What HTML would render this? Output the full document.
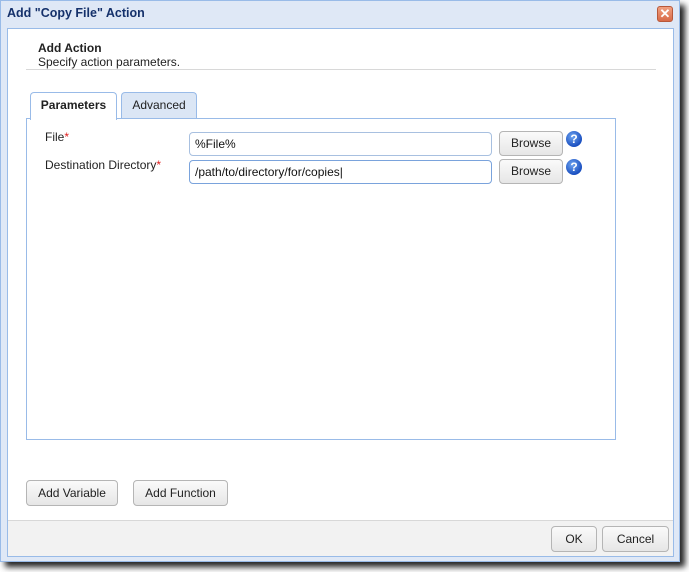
<!DOCTYPE html>
<html><head><style>
*{box-sizing:border-box;margin:0;padding:0}
body{width:689px;height:572px;background:#fff;position:relative;overflow:hidden;font-family:"Liberation Sans",Arial,sans-serif;font-size:12px;color:#222}
.abs{position:absolute}
.frame{left:0;top:0;width:680px;height:562px;background:#dfe8f6;border:1px solid #99bbe8;box-shadow:5px 5px 6px #222}
.title{left:7px;top:6px;font-weight:bold;font-size:12.5px;color:#15316b}
.inner{left:7px;top:28px;width:667px;height:529px;background:#fff;border:1px solid #99bbe8}
.btn{position:absolute;background:linear-gradient(#fafafa,#e6e6e6);border:1px solid #b5b5b5;border-radius:4px;text-align:center;font-size:12px;color:#222}
.inp{position:absolute;background:#fff;border:1px solid #a8c0e0;border-radius:4px;padding-left:5px;font-size:12px;line-height:22px;color:#111}
.help{position:absolute;width:16px;height:16px;border-radius:50%;background:radial-gradient(circle at 40% 35%,#6fa5f0,#1a4fc0 70%);color:#fff;font-weight:bold;font-size:12px;text-align:center;line-height:16px}
.req{color:#e02020}
</style></head><body>
<div class="abs frame"></div>
<div class="abs title">Add "Copy File" Action</div>
<div class="abs" style="left:657px;top:6px;width:16px;height:16px;border-radius:3px;background:linear-gradient(#f0a080,#d86a48);border:1px solid #b8583a;color:#fff;font-weight:bold;font-size:13px;text-align:center;line-height:14px">✕</div>
<div class="abs inner"></div>
<div class="abs" style="left:38px;top:41px;font-weight:bold">Add Action</div>
<div class="abs" style="left:38px;top:55px">Specify action parameters.</div>
<div class="abs" style="left:26px;top:69px;width:630px;height:1px;background:#d8d8d8"></div>
<div class="abs" style="left:26px;top:118px;width:590px;height:322px;border:1px solid #99bbe8"></div>
<div class="abs" style="left:30px;top:92px;width:87px;height:28px;background:#fff;border:1px solid #99bbe8;border-bottom:none;border-radius:4px 4px 0 0;font-weight:bold;text-align:center;line-height:24px">Parameters</div>
<div class="abs" style="left:121px;top:92px;width:76px;height:26px;background:#dbe6f5;border:1px solid #99bbe8;border-bottom:none;border-radius:4px 4px 0 0;text-align:center;line-height:24px">Advanced</div>
<div class="abs" style="left:45px;top:130px">File<span class="req">*</span></div>
<div class="abs" style="left:45px;top:158px">Destination Directory<span class="req">*</span></div>
<div class="inp" style="left:189px;top:132px;width:303px;height:24px">%File%</div>
<div class="inp" style="left:189px;top:160px;width:303px;height:24px;border-color:#7aa3dc">/path/to/directory/for/copies|</div>
<div class="btn" style="left:499px;top:131px;width:64px;height:25px;line-height:23px">Browse</div>
<div class="btn" style="left:499px;top:159px;width:64px;height:25px;line-height:23px">Browse</div>
<div class="help" style="left:566px;top:131px">?</div>
<div class="help" style="left:566px;top:159px">?</div>
<div class="btn" style="left:26px;top:480px;width:92px;height:26px;line-height:24px">Add Variable</div>
<div class="btn" style="left:133px;top:480px;width:95px;height:26px;line-height:24px">Add Function</div>
<div class="abs" style="left:8px;top:520px;width:665px;height:36px;background:#f2f2f2;border-top:1px solid #d8d8d8"></div>
<div class="btn" style="left:551px;top:526px;width:46px;height:26px;line-height:24px">OK</div>
<div class="btn" style="left:602px;top:526px;width:67px;height:26px;line-height:24px">Cancel</div>
</body></html>
